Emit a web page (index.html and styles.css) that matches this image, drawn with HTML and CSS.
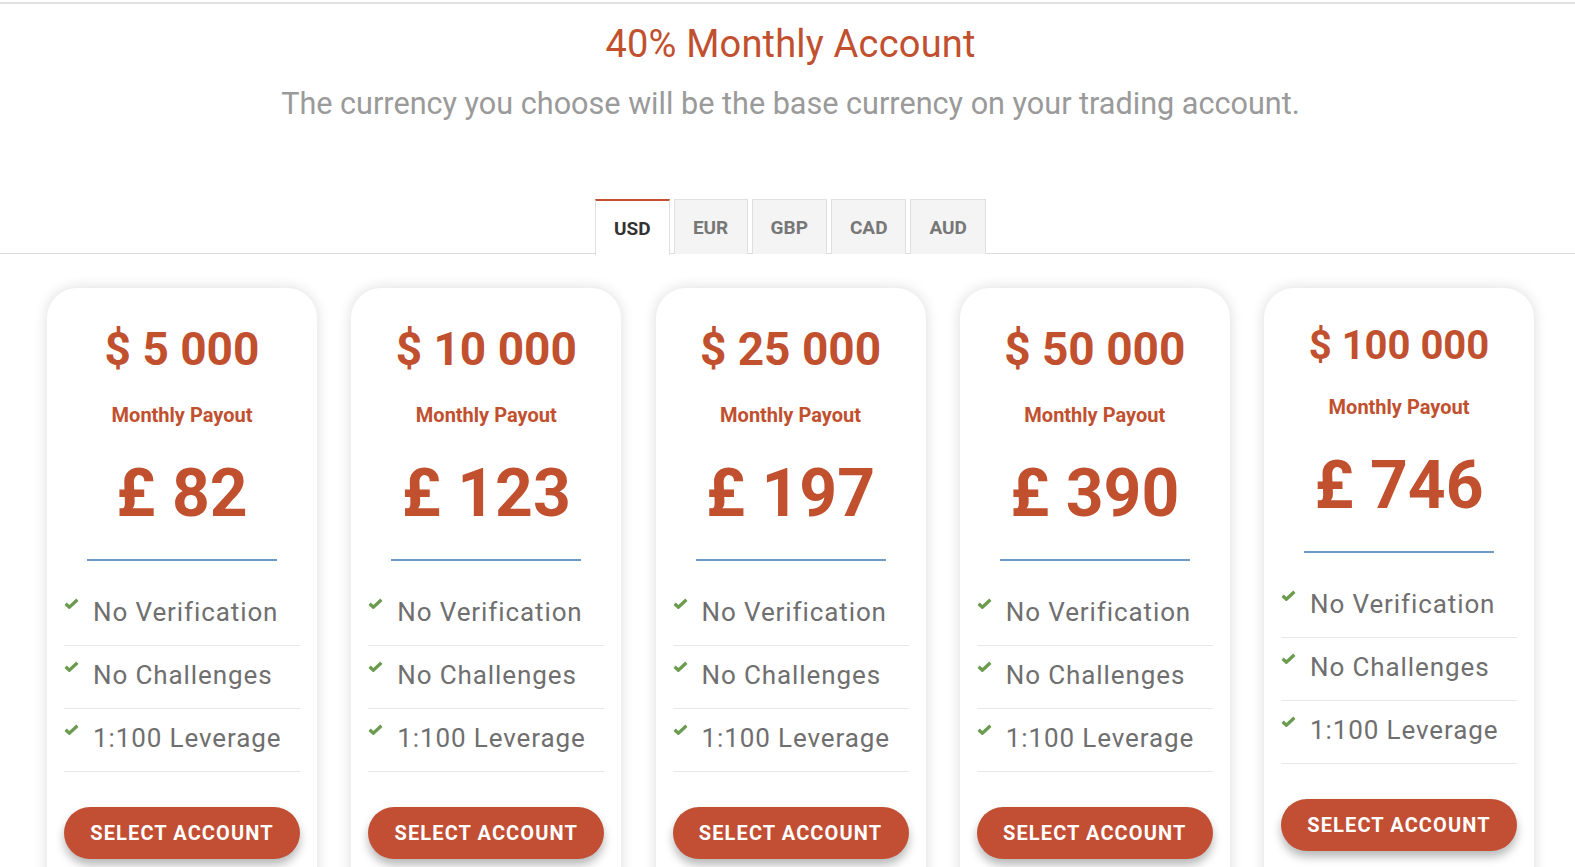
FILE: index.html
```html
<!DOCTYPE html>
<html lang="en">
<head>
<meta charset="utf-8">
<title>40% Monthly Account</title>
<link rel="stylesheet" href="styles.css">
</head>
<body>
<div class="page">
  <header class="intro">
    <h1 class="title">40% Monthly Account</h1>
    <p class="subtitle">The currency you choose will be the base currency on your trading account.</p>
  </header>
  <nav class="tabs">
    <span class="tab active">USD</span>
    <span class="tab">EUR</span>
    <span class="tab">GBP</span>
    <span class="tab">CAD</span>
    <span class="tab">AUD</span>
  </nav>
  <section class="cards">
    <div class="card">
      <div class="amount">$ 5 000</div>
      <div class="label">Monthly Payout</div>
      <div class="payout">£ 82</div>
      <div class="rule"></div>
      <ul class="features">
        <li><svg class="check" viewBox="0 0 14 10"><path d="M1.5 5.2 L5 8.5 L12.5 1.5" /></svg>No Verification</li>
        <li><svg class="check" viewBox="0 0 14 10"><path d="M1.5 5.2 L5 8.5 L12.5 1.5" /></svg>No Challenges</li>
        <li><svg class="check" viewBox="0 0 14 10"><path d="M1.5 5.2 L5 8.5 L12.5 1.5" /></svg>1:100 Leverage</li>
      </ul>
      <a class="btn">SELECT ACCOUNT</a>
    </div>
    <div class="card">
      <div class="amount">$ 10 000</div>
      <div class="label">Monthly Payout</div>
      <div class="payout">£ 123</div>
      <div class="rule"></div>
      <ul class="features">
        <li><svg class="check" viewBox="0 0 14 10"><path d="M1.5 5.2 L5 8.5 L12.5 1.5" /></svg>No Verification</li>
        <li><svg class="check" viewBox="0 0 14 10"><path d="M1.5 5.2 L5 8.5 L12.5 1.5" /></svg>No Challenges</li>
        <li><svg class="check" viewBox="0 0 14 10"><path d="M1.5 5.2 L5 8.5 L12.5 1.5" /></svg>1:100 Leverage</li>
      </ul>
      <a class="btn">SELECT ACCOUNT</a>
    </div>
    <div class="card">
      <div class="amount">$ 25 000</div>
      <div class="label">Monthly Payout</div>
      <div class="payout">£ 197</div>
      <div class="rule"></div>
      <ul class="features">
        <li><svg class="check" viewBox="0 0 14 10"><path d="M1.5 5.2 L5 8.5 L12.5 1.5" /></svg>No Verification</li>
        <li><svg class="check" viewBox="0 0 14 10"><path d="M1.5 5.2 L5 8.5 L12.5 1.5" /></svg>No Challenges</li>
        <li><svg class="check" viewBox="0 0 14 10"><path d="M1.5 5.2 L5 8.5 L12.5 1.5" /></svg>1:100 Leverage</li>
      </ul>
      <a class="btn">SELECT ACCOUNT</a>
    </div>
    <div class="card">
      <div class="amount">$ 50 000</div>
      <div class="label">Monthly Payout</div>
      <div class="payout">£ 390</div>
      <div class="rule"></div>
      <ul class="features">
        <li><svg class="check" viewBox="0 0 14 10"><path d="M1.5 5.2 L5 8.5 L12.5 1.5" /></svg>No Verification</li>
        <li><svg class="check" viewBox="0 0 14 10"><path d="M1.5 5.2 L5 8.5 L12.5 1.5" /></svg>No Challenges</li>
        <li><svg class="check" viewBox="0 0 14 10"><path d="M1.5 5.2 L5 8.5 L12.5 1.5" /></svg>1:100 Leverage</li>
      </ul>
      <a class="btn">SELECT ACCOUNT</a>
    </div>
    <div class="card">
      <div class="amount small">$ 100 000</div>
      <div class="label">Monthly Payout</div>
      <div class="payout">£ 746</div>
      <div class="rule"></div>
      <ul class="features">
        <li><svg class="check" viewBox="0 0 14 10"><path d="M1.5 5.2 L5 8.5 L12.5 1.5" /></svg>No Verification</li>
        <li><svg class="check" viewBox="0 0 14 10"><path d="M1.5 5.2 L5 8.5 L12.5 1.5" /></svg>No Challenges</li>
        <li><svg class="check" viewBox="0 0 14 10"><path d="M1.5 5.2 L5 8.5 L12.5 1.5" /></svg>1:100 Leverage</li>
      </ul>
      <a class="btn">SELECT ACCOUNT</a>
    </div>
  </section>
</div>
</body>
</html>
```

FILE: styles.css
```css
* { box-sizing: border-box; }
html, body { margin: 0; padding: 0; background: #fff; }
body {
  font-family: Roboto, "Liberation Sans", Arial, sans-serif;
  overflow: hidden;
  height: 867px;
}
.page {
  margin-top: 2px;
  border-top: 2px solid #e2e2e2;
}
.intro {
  text-align: center;
  padding-left: 6px;
}
.title {
  margin: 0;
  padding-top: 17px;
  font-size: 38px;
  font-weight: 400;
  line-height: 46px;
  letter-spacing: 0.2px;
  color: #c1502f;
}
.subtitle {
  margin: 19px 0 0;
  font-size: 30.6px;
  font-weight: 400;
  line-height: 36px;
  color: #9a9a9a;
}
.tabs {
  display: flex;
  justify-content: center;
  gap: 4px;
  margin-top: 77px;
  padding-left: 6px;
  border-bottom: 1px solid #dcdcdc;
  height: 55px;
}
.tab {
  display: flex;
  align-items: center;
  justify-content: center;
  padding: 0 18px;
  min-width: 74px;
  height: 55px;
  font-size: 19px;
  font-weight: 700;
  color: #777;
  background: #f4f4f4;
  border: 1px solid #e0e0e0;
  border-bottom: none;
}
.tab.active {
  background: #fff;
  color: #333;
  border-color: #e0e0e0;
  border-top: 2px solid #c1502f;
  height: 56px;
  margin-bottom: -1px;
}
.cards {
  display: grid;
  grid-template-columns: repeat(5, 270px);
  column-gap: 34.25px;
  padding-left: 47px;
  margin-top: 34px;
}
.card {
  background: #fff;
  border-radius: 30px;
  box-shadow: 0 0 14px rgba(0, 0, 0, 0.14);
  padding: 34px 17px 40px;
  text-align: center;
  height: 640px;
}
.amount {
  font-size: 46px;
  font-weight: 700;
  line-height: 55px;
  color: #c1502f;
}
.amount.small {
  font-size: 40px;
  line-height: 47px;
}
.label {
  margin-top: 26px;
  font-size: 20px;
  font-weight: 700;
  line-height: 24px;
  color: #c1502f;
}
.payout {
  margin-top: 27px;
  font-size: 66px;
  font-weight: 700;
  line-height: 79px;
  color: #c1502f;
}
.rule {
  width: 190px;
  height: 2px;
  margin: 26px auto 0;
  background: #6b9bc6;
}
.features {
  list-style: none;
  margin: 22px 0 0;
  padding: 0;
  text-align: left;
}
.features li {
  position: relative;
  padding: 14px 0 17px 29px;
  font-size: 26px;
  line-height: 31px;
  letter-spacing: 0.9px;
  color: #6f6f6f;
  border-bottom: 1px solid #e8e8e8;
}
.check {
  position: absolute;
  left: 0;
  top: 15px;
  width: 15px;
  height: 11px;
  fill: none;
  stroke: #6a9b4f;
  stroke-width: 3;
  stroke-linecap: butt;
  stroke-linejoin: miter;
}
.btn {
  display: flex;
  align-items: center;
  justify-content: center;
  margin-top: 35px;
  height: 52px;
  border-radius: 26px;
  background: #c24e33;
  color: #fff;
  font-size: 20px;
  font-weight: 700;
  letter-spacing: 1.1px;
  box-shadow: 0 6px 10px rgba(0, 0, 0, 0.28);
}
```
